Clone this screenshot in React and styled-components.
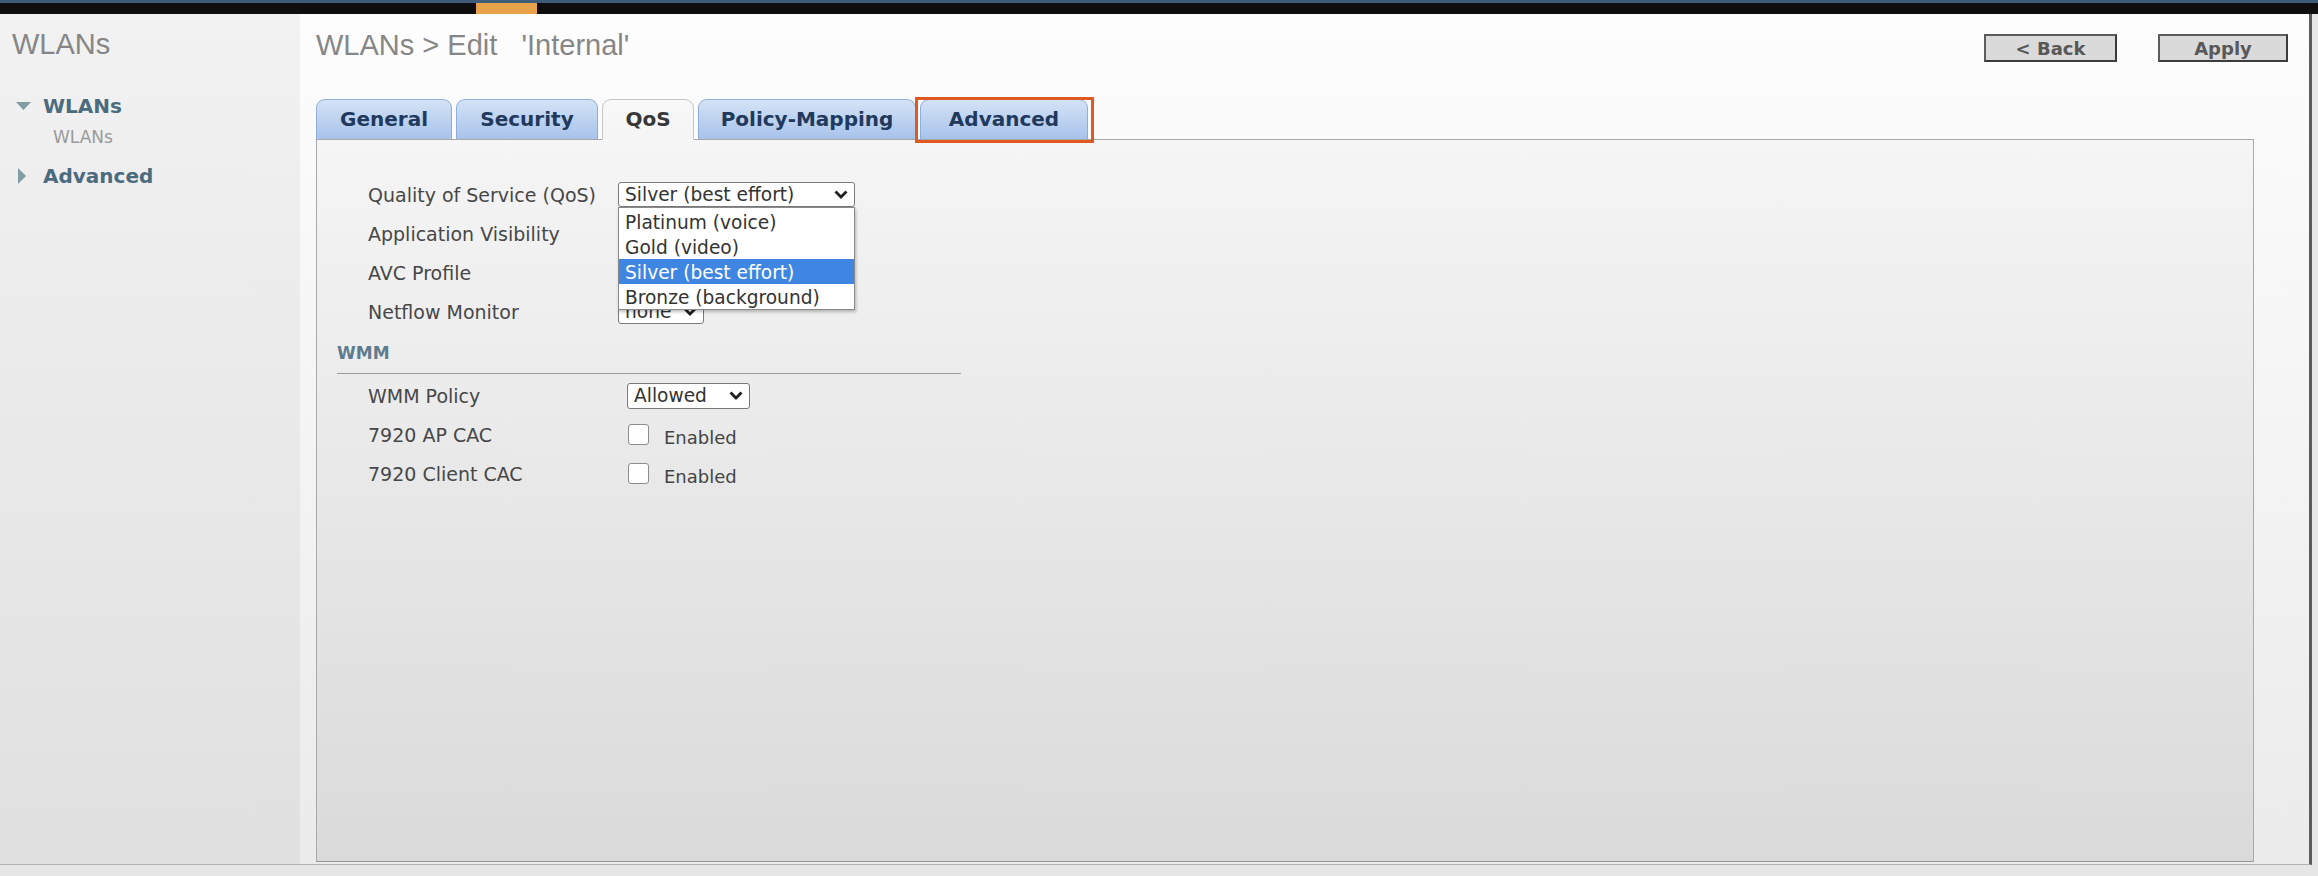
import React from "react";
import styled, { createGlobalStyle } from "styled-components";

const GlobalStyle = createGlobalStyle`
  html, body {
    margin: 0;
    padding: 0;
  }
  body {
    width: 2318px;
    height: 876px;
    overflow: hidden;
    background: #e7e7e7;
    font-family: "DejaVu Sans", Verdana, sans-serif;
  }
`;

const Page = styled.div`
  display: flex;
  flex-direction: column;
  height: 876px;
`;

const TopBar = styled.div`
  height: 11px;
  border-top: 3px solid #3e5c78;
  background: #0e0e0e;
  padding-left: 476px;
  display: flex;
`;

const TopMark = styled.div`
  width: 61px;
  background: #e8a24a;
`;

const Frame = styled.div`
  display: flex;
  box-sizing: border-box;
  width: 2312px;
  height: 851px;
  border-right: 3px solid #5b5b5b;
  border-bottom: 1px solid #b3b3b3;
`;

const BottomStrip = styled.div`
  flex: 1;
  background: #e6e6e6;
`;

// left navigation
const Sidebar = styled.div`
  width: 300px;
  flex-shrink: 0;
  display: flex;
  flex-direction: column;
  padding: 13px 0 0 12px;
  box-sizing: border-box;
  background: linear-gradient(#f2f2f2, #e0e0e0);
`;

const SideTitle = styled.div`
  font-family: "Liberation Sans", Arial, sans-serif;
  font-size: 29px;
  line-height: 34px;
  color: #868686;
`;

const NavItem = styled.div`
  display: flex;
  align-items: center;
  gap: 11px;
  margin-top: ${(p) => p.$top}px;
  padding-left: 3px;
  font-size: 20px;
  font-weight: bold;
  line-height: 24px;
  color: #4b6b7e;
`;

const NavSub = styled.div`
  margin-top: 8px;
  padding-left: 41px;
  font-size: 17px;
  line-height: 22px;
  color: #9a9a9a;
`;

const Arrow = styled.svg`
  width: 17px;
  height: 20px;
  flex-shrink: 0;
  fill: #7e9ea3;
`;

// main area
const Main = styled.div`
  flex: 1;
  display: flex;
  flex-direction: column;
  padding: 14px 21px 2px 16px;
  background: linear-gradient(#fdfdfd, #ebebeb);
`;

const Header = styled.div`
  display: flex;
  justify-content: space-between;
  align-items: flex-start;
`;

const PageTitle = styled.div`
  font-family: "Liberation Sans", Arial, sans-serif;
  font-size: 29px;
  line-height: 34px;
  color: #868686;
  white-space: pre;
`;

const Buttons = styled.div`
  display: flex;
  gap: 41px;
  margin-top: 6px;
`;

const Button = styled.div`
  width: ${(p) => p.$w}px;
  height: 28px;
  box-sizing: border-box;
  display: flex;
  align-items: center;
  justify-content: center;
  background: #dadada;
  border: 2px solid #3c3c3c;
  border-top-color: #5c5c5c;
  border-left-color: #5c5c5c;
  font-size: 18px;
  font-weight: bold;
  color: #585858;
`;

const Tabs = styled.div`
  display: flex;
  gap: 4px;
  margin-top: 37px;
  margin-bottom: -1px;
  position: relative;
  z-index: 1;
`;

const Tab = styled.div`
  position: relative;
  width: ${(p) => p.$w}px;
  height: 41px;
  box-sizing: border-box;
  display: flex;
  align-items: center;
  justify-content: center;
  padding-bottom: 2px;
  border-radius: 9px 9px 0 0;
  font-size: 20px;
  font-weight: bold;
  border: 1px solid ${(p) => (p.$active ? "#c6c6c6" : "#8eadd8")};
  border-bottom-color: ${(p) => (p.$active ? "#f5f5f5" : "#a8a8a8")};
  background: ${(p) =>
    p.$active
      ? "linear-gradient(#f8f8f8, #f5f5f5)"
      : "linear-gradient(#d4e3f6, #a7c2ea)"};
  color: ${(p) => (p.$active ? "#383838" : "#21395c")};

  ${(p) =>
    p.$marked &&
    `
    &::after {
      content: "";
      position: absolute;
      top: -3px;
      left: -6px;
      right: -7px;
      bottom: -4px;
      border: 3px solid #de5a21;
    }
  `}
`;

const Panel = styled.div`
  flex: 1;
  margin-right: 34px;
  position: relative;
  display: flex;
  flex-direction: column;
  padding: 35px 0 0 20px;
  border: 1px solid #a9a9a9;
  border-bottom-color: #959595;
  background: linear-gradient(#f5f5f5, #dadada);
`;

const Row = styled.div`
  display: flex;
  align-items: center;
  height: 39px;
  padding-left: 31px;
`;

const Label = styled.div`
  width: ${(p) => p.$w}px;
  flex-shrink: 0;
  font-size: 19px;
  color: #474747;
`;

const Control = styled.div`
  position: relative;
  display: flex;
  align-items: center;
`;

const Select = styled.div`
  width: ${(p) => p.$w}px;
  height: ${(p) => p.$h || 25}px;
  box-sizing: border-box;
  display: flex;
  align-items: center;
  justify-content: space-between;
  padding: 0 6px 0 6px;
  border: 1px solid #7a7a7a;
  border-radius: 3px;
  background: #fff;
  font-size: 18.6px;
  color: #333;
`;

const Chevron = styled.svg`
  width: 14px;
  height: 9px;
  stroke: #1e1e1e;
  stroke-width: 2.8;
  fill: none;
`;

const DropList = styled.div`
  position: absolute;
  top: 25px;
  left: 0;
  width: 237px;
  box-sizing: border-box;
  z-index: 5;
  padding-top: 1px;
  border: 1px solid #8a8a8a;
  background: #fff;
  box-shadow: 1px 2px 3px rgba(0, 0, 0, 0.25);
`;

const DropItem = styled.div`
  height: 25px;
  display: flex;
  align-items: center;
  padding: 2px 0 0 6px;
  box-sizing: border-box;
  font-size: 18.6px;
  color: ${(p) => (p.$sel ? "#fff" : "#333")};
  background: ${(p) => (p.$sel ? "#3f86e2" : "transparent")};
`;

const SectionHead = styled.div`
  width: 624px;
  margin-top: 11px;
  padding-bottom: 9px;
  margin-bottom: 2px;
  border-bottom: 1px solid #9c9c9c;
  font-size: 17px;
  font-weight: bold;
  line-height: 22px;
  color: #5d7d8f;
`;

const CheckBox = styled.div`
  width: 21px;
  height: 21px;
  box-sizing: border-box;
  border: 1px solid #8c8c8c;
  border-radius: 3px;
  background: #fff;
  margin-left: 1px;
`;

const CheckText = styled.span`
  margin: 5px 0 0 15px;
  font-size: 18px;
  color: #444;
`;

const qosOptions = [
  "Platinum (voice)",
  "Gold (video)",
  "Silver (best effort)",
  "Bronze (background)",
];

const tabs = [
  { name: "General", w: 136 },
  { name: "Security", w: 142 },
  { name: "QoS", w: 92, active: true },
  { name: "Policy-Mapping", w: 218 },
  { name: "Advanced", w: 168, marked: true },
];

function Down() {
  return (
    <Chevron viewBox="0 0 14 9">
      <polyline points="1.5,1.5 7,7 12.5,1.5" />
    </Chevron>
  );
}

function App() {
  return (
    <Page>
      <GlobalStyle />
      <TopBar>
        <TopMark />
      </TopBar>
      <Frame>
        <Sidebar>
          <SideTitle>WLANs</SideTitle>
          <NavItem $top={33}>
            <Arrow viewBox="0 0 17 20">
              <polygon points="1,6 16,6 8.5,14" />
            </Arrow>
            WLANs
          </NavItem>
          <NavSub>WLANs</NavSub>
          <NavItem $top={16}>
            <Arrow viewBox="0 0 17 20">
              <polygon points="3,2 11,10 3,18" />
            </Arrow>
            Advanced
          </NavItem>
        </Sidebar>

        <Main>
          <Header>
            <PageTitle>{"WLANs > Edit   'Internal'"}</PageTitle>
            <Buttons>
              <Button $w={133}>&lt; Back</Button>
              <Button $w={130}>Apply</Button>
            </Buttons>
          </Header>

          <Tabs>
            {tabs.map((t) => (
              <Tab key={t.name} $w={t.w} $active={t.active} $marked={t.marked}>
                {t.name}
              </Tab>
            ))}
          </Tabs>

          <Panel>
            <Row>
              <Label $w={250}>Quality of Service (QoS)</Label>
              <Control>
                <Select $w={237}>
                  Silver (best effort)
                  <Down />
                </Select>
                <DropList>
                  {qosOptions.map((o) => (
                    <DropItem key={o} $sel={o === "Silver (best effort)"}>
                      {o}
                    </DropItem>
                  ))}
                </DropList>
              </Control>
            </Row>
            <Row>
              <Label $w={250}>Application Visibility</Label>
            </Row>
            <Row>
              <Label $w={250}>AVC Profile</Label>
            </Row>
            <Row>
              <Label $w={250}>Netflow Monitor</Label>
              <Control>
                <Select $w={86}>
                  none
                  <Down />
                </Select>
              </Control>
            </Row>

            <SectionHead>WMM</SectionHead>
            <Row>
              <Label $w={259}>WMM Policy</Label>
              <Select $w={123} $h={26}>
                Allowed
                <Down />
              </Select>
            </Row>
            <Row>
              <Label $w={259}>7920 AP CAC</Label>
              <CheckBox />
              <CheckText>Enabled</CheckText>
            </Row>
            <Row>
              <Label $w={259}>7920 Client CAC</Label>
              <CheckBox />
              <CheckText>Enabled</CheckText>
            </Row>
          </Panel>
        </Main>
      </Frame>
      <BottomStrip />
    </Page>
  );
}

export default App;
